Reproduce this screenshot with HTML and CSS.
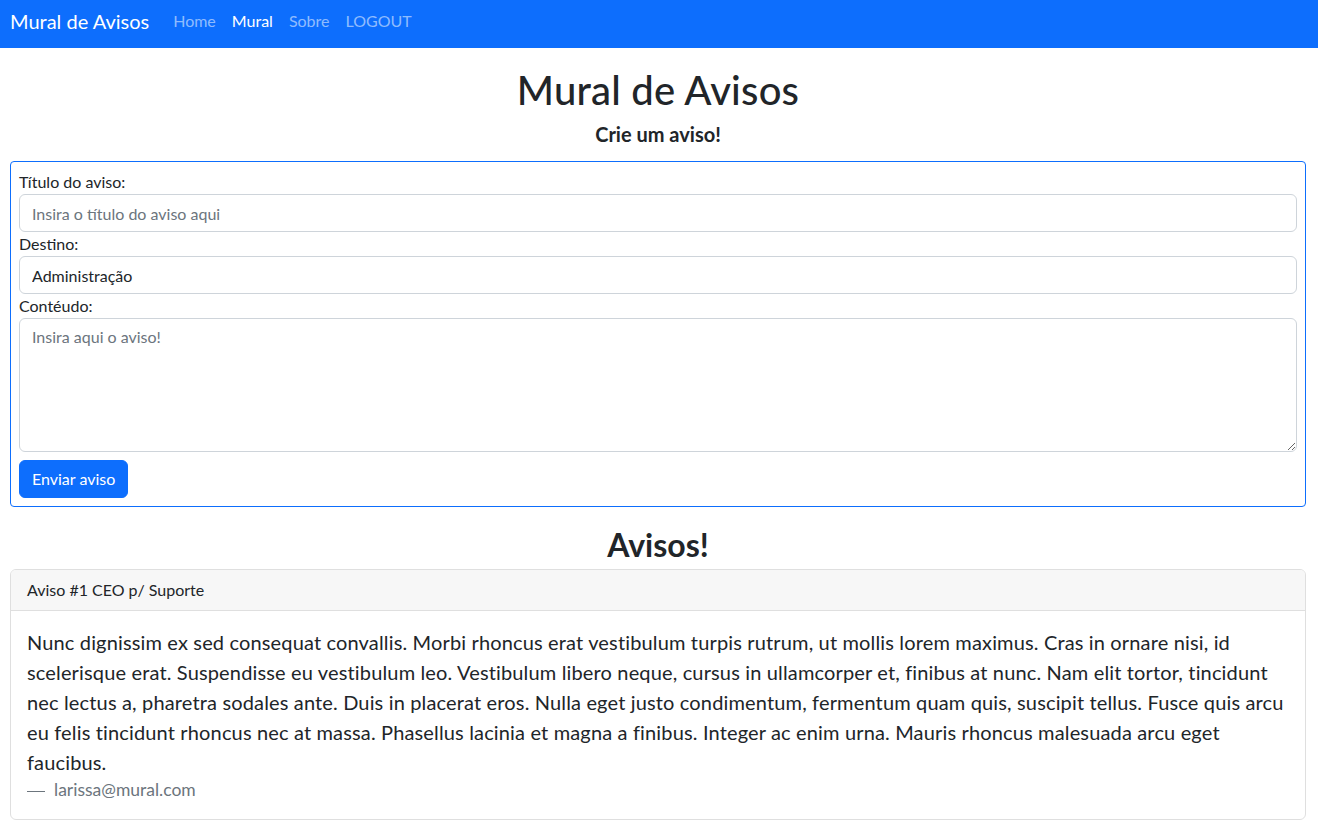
FILE: index.html
```html
<!DOCTYPE html>
<html lang="pt-br">
<head>
<meta charset="utf-8">
<title>Mural de Avisos</title>
<link rel="stylesheet" href="styles.css">
</head>
<body>
<div class="page">
  <nav class="navbar">
    <a class="brand" href="#">Mural de Avisos</a>
    <ul class="nav-links">
      <li><a href="#">Home</a></li>
      <li><a class="active" href="#">Mural</a></li>
      <li><a href="#">Sobre</a></li>
      <li><a href="#">LOGOUT</a></li>
    </ul>
  </nav>
  <main class="main">
    <h1 class="title">Mural de Avisos</h1>
    <h5 class="subtitle">Crie um aviso!</h5>
    <form class="form-box">
      <label for="titulo">Título do aviso:</label>
      <input id="titulo" class="control" type="text" placeholder="Insira o título do aviso aqui">
      <label for="destino">Destino:</label>
      <input id="destino" class="control" type="text" value="Administração">
      <label for="conteudo">Contéudo:</label>
      <textarea id="conteudo" class="control area" placeholder="Insira aqui o aviso!"></textarea>
      <button type="button" class="btn">Enviar aviso</button>
    </form>
    <h2 class="section-title">Avisos!</h2>
    <div class="card">
      <div class="card-header">Aviso #1 CEO p/ Suporte</div>
      <div class="card-body">
        <p class="card-text">Nunc dignissim ex sed consequat convallis. Morbi rhoncus erat vestibulum turpis rutrum, ut mollis lorem maximus. Cras in ornare nisi, id scelerisque erat. Suspendisse eu vestibulum leo. Vestibulum libero neque, cursus in ullamcorper et, finibus at nunc. Nam elit tortor, tincidunt nec lectus a, pharetra sodales ante. Duis in placerat eros. Nulla eget justo condimentum, fermentum quam quis, suscipit tellus. Fusce quis arcu eu felis tincidunt rhoncus nec at massa. Phasellus lacinia et magna a finibus. Integer ac enim urna. Mauris rhoncus malesuada arcu eget faucibus.</p>
        <div class="author">larissa@mural.com</div>
      </div>
    </div>
  </main>
</div>
</body>
</html>
```
FILE: styles.css
```css
*{box-sizing:border-box}
body{margin:0;font-family:Lato,"Open Sans",sans-serif;color:#212529;background:#fff}
.page{width:1318px}
a{text-decoration:none}
.navbar{background:#0d6efd;height:48px;display:flex;align-items:center;padding:0 12px 6px 10px}
.brand{color:#fff;font-size:20px;line-height:30px;margin-right:16px}
.nav-links{list-style:none;margin:0;padding:0;display:flex}
.nav-links a{display:block;padding:8px;font-size:16px;line-height:24px;color:rgba(255,255,255,.55)}
.nav-links a.active{color:#fff}
.main{padding:0 12px 0 10px}
.title{margin:18px 0 8px;font-size:40px;line-height:48px;font-weight:500;text-align:center;letter-spacing:.2px}
.subtitle{margin:0;font-size:20px;line-height:24px;font-weight:700;text-align:center}
.form-box{margin-top:15px;border:1px solid #0d6efd;border-radius:4px;padding:8px;display:flex;flex-direction:column}
.form-box label{font-size:16px;line-height:24px}
.control{display:block;width:100%;height:38px;border:1px solid #ced4da;border-radius:6px;padding:6px 12px;font-family:inherit;font-size:16px;line-height:24px;color:#212529}
.control::placeholder{color:#6c757d}
.area{height:134px;resize:vertical}
.btn{align-self:flex-start;margin-top:8px;height:38px;padding:6px 12px;border:1px solid #0d6efd;border-radius:6px;background:#0d6efd;color:#fff;font-family:inherit;font-size:16px;line-height:24px}
.section-title{margin:19px 0 5px;font-size:32px;line-height:38px;font-weight:700;text-align:center}
.card{border:1px solid #dfdfdf;border-radius:6px;overflow:hidden}
.card-header{background:#f7f7f7;border-bottom:1px solid #dfdfdf;padding:8px 16px;font-size:16px;line-height:24px}
.card-body{padding:16px}
.card-text{margin:0;font-size:20px;line-height:30px;letter-spacing:.15px}
.author{font-size:17.5px;line-height:26px;color:#6c757d}
.author::before{content:"";display:inline-block;width:18px;border-top:1px solid #6c757d;margin-right:9px;vertical-align:middle}
```
